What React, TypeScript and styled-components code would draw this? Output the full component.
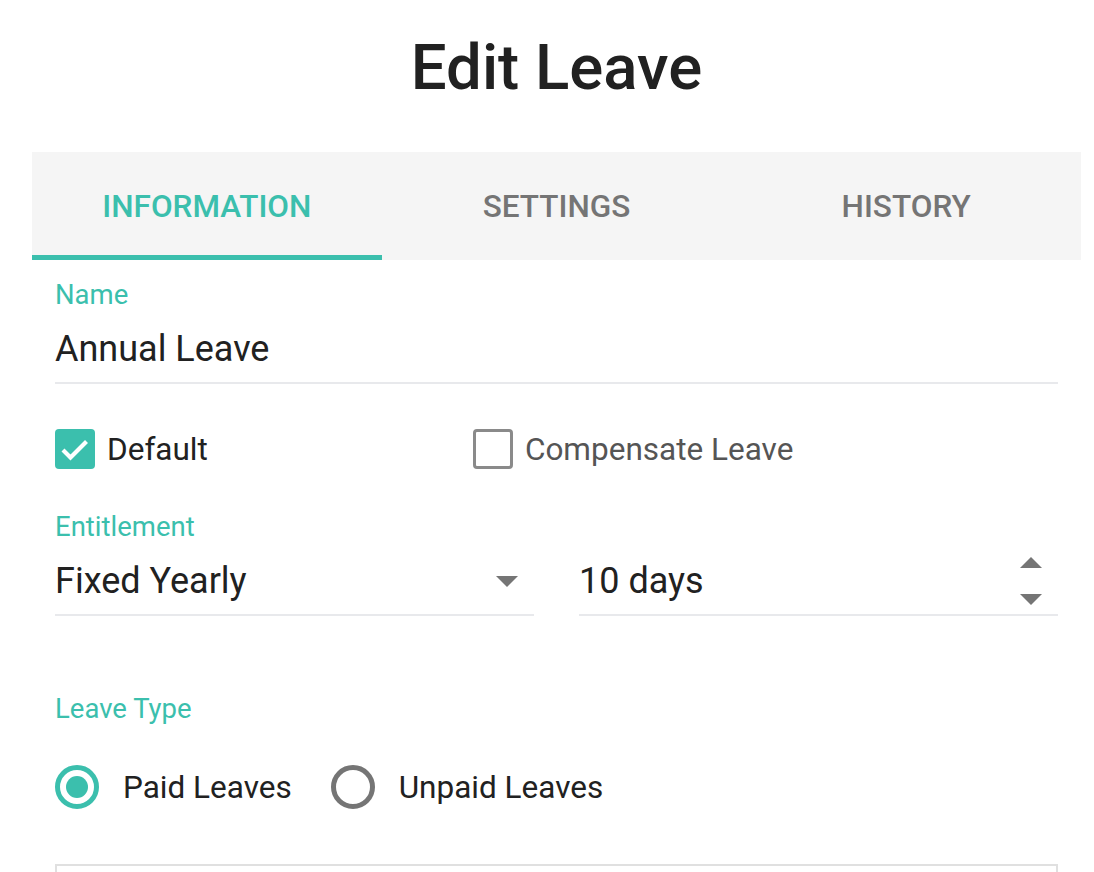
import React from 'react';
import styled, { createGlobalStyle } from 'styled-components';

const teal = '#3bbfad';

const GlobalStyle = createGlobalStyle`
  html, body {
    margin: 0;
    padding: 0;
    background: #fff;
    overflow: hidden;
    font-family: Roboto, "Liberation Sans", sans-serif;
  }
`;

const Page = styled.div`
  width: 1049px;
  margin-left: 32px;
`;

const Title = styled.h1`
  margin: 0 0 46px;
  padding-top: 29px;
  font-size: 63.5px;
  line-height: 77px;
  font-weight: 500;
  color: #212121;
  text-align: center;
`;

const TabBar = styled.div`
  display: grid;
  grid-template-columns: repeat(3, 1fr);
  height: 108px;
  background: #f5f5f5;
`;

const Tab = styled.div<{ $active?: boolean }>`
  display: flex;
  align-items: center;
  justify-content: center;
  font-size: 31.5px;
  font-weight: 500;
  text-transform: uppercase;
  color: ${(p) => (p.$active ? teal : '#757575')};
  box-shadow: ${(p) => (p.$active ? `inset 0 -5px 0 ${teal}` : 'none')};
`;

const Form = styled.div`
  padding: 0 23px;
`;

const Field = styled.div<{ $top: number }>`
  margin-top: ${(p) => p.$top}px;
`;

const Label = styled.div`
  font-size: 27.5px;
  line-height: 32px;
  color: ${teal};
  margin-bottom: 17px;
`;

const Input = styled.div`
  display: flex;
  align-items: center;
  justify-content: space-between;
  font-size: 36px;
  line-height: 42px;
  color: #212121;
  padding-bottom: 12px;
  border-bottom: 2px solid #e8e9ec;
`;

const Pair = styled.div`
  display: grid;
  grid-template-columns: 1fr 1fr;
  column-gap: 45px;
`;

const Caret = styled.svg`
  width: 22px;
  height: 11px;
  margin-right: 16px;
  fill: #757575;
`;

const Spinner = styled.div`
  display: flex;
  flex-direction: column;
  justify-content: space-between;
  height: 48px;
  margin: -3px 16px -3px 0;
`;

const Arrow = styled.svg`
  width: 22px;
  height: 11px;
  fill: #757575;
`;

const CheckRow = styled.div`
  display: grid;
  grid-template-columns: 5fr 7fr;
  margin-top: 45px;
  height: 40px;
`;

const CheckItem = styled.label<{ $muted?: boolean }>`
  display: flex;
  align-items: center;
  gap: 12px;
  font-size: 31.5px;
  color: ${(p) => (p.$muted ? '#555' : '#212121')};
`;

const Box = styled.span<{ $checked?: boolean }>`
  box-sizing: border-box;
  width: 40px;
  height: 40px;
  border-radius: 4px;
  background: ${(p) => (p.$checked ? teal : '#fff')};
  border: ${(p) => (p.$checked ? 'none' : '3.5px solid #8a8a8a')};
  display: flex;
  align-items: center;
  justify-content: center;
`;

const RadioGroup = styled.div`
  display: flex;
  align-items: center;
  margin-top: 40px;
  gap: 39px;
`;

const RadioItem = styled.label`
  display: flex;
  align-items: center;
  gap: 24px;
  font-size: 31.5px;
  color: #212121;
`;

const Circle = styled.span<{ $checked?: boolean }>`
  box-sizing: border-box;
  width: 44px;
  height: 44px;
  border-radius: 50%;
  border: 5px solid ${(p) => (p.$checked ? teal : '#757575')};
  display: flex;
  align-items: center;
  justify-content: center;
  &::after {
    content: '';
    display: ${(p) => (p.$checked ? 'block' : 'none')};
    width: 22px;
    height: 22px;
    border-radius: 50%;
    background: ${teal};
  }
`;

const Panel = styled.div`
  margin-top: 55px;
  height: 6px;
  border: 2px solid #e0e0e0;
  border-bottom: none;
`;

const CheckMark = () => (
  <svg width="40" height="40" viewBox="0 0 40 40">
    <path d="M8 21 L15.5 28.5 L31.5 12.5" fill="none" stroke="#fff" strokeWidth="4.2" />
  </svg>
);

export default function App() {
  return (
    <>
      <GlobalStyle />
      <Page>
        <Title>Edit Leave</Title>
        <TabBar>
          <Tab $active>Information</Tab>
          <Tab>Settings</Tab>
          <Tab>History</Tab>
        </TabBar>
        <Form>
          <Field $top={19}>
            <Label>Name</Label>
            <Input>Annual Leave</Input>
          </Field>

          <CheckRow>
            <CheckItem>
              <Box $checked>
                <CheckMark />
              </Box>
              Default
            </CheckItem>
            <CheckItem $muted>
              <Box />
              Compensate Leave
            </CheckItem>
          </CheckRow>

          <Field $top={42}>
            <Label>Entitlement</Label>
            <Pair>
              <Input>
                <span>Fixed Yearly</span>
                <Caret viewBox="0 0 22 11">
                  <path d="M0 0 H22 L11 11 Z" />
                </Caret>
              </Input>
              <Input>
                <span>10 days</span>
                <Spinner>
                  <Arrow viewBox="0 0 22 11">
                    <path d="M0 11 H22 L11 0 Z" />
                  </Arrow>
                  <Arrow viewBox="0 0 22 11">
                    <path d="M0 0 H22 L11 11 Z" />
                  </Arrow>
                </Spinner>
              </Input>
            </Pair>
          </Field>

          <Field $top={77}>
            <Label>Leave Type</Label>
            <RadioGroup>
              <RadioItem>
                <Circle $checked />
                Paid Leaves
              </RadioItem>
              <RadioItem>
                <Circle />
                Unpaid Leaves
              </RadioItem>
            </RadioGroup>
          </Field>

          <Panel />
        </Form>
      </Page>
    </>
  );
}
